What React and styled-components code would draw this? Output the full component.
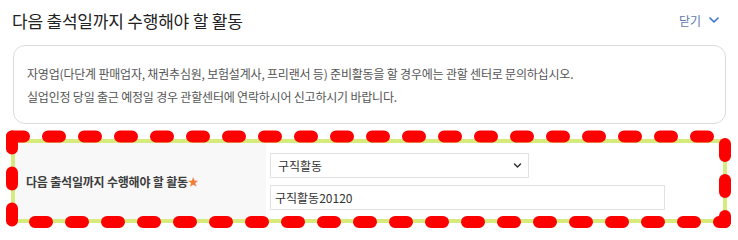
import React from "react";
import styled, { createGlobalStyle } from "styled-components";

const GlobalStyle = createGlobalStyle`
  html, body {
    margin: 0;
    padding: 0;
    background: #fff;
  }
  body {
    font-family: "Noto Sans CJK KR", "Noto Sans", sans-serif;
    color: #333;
  }
`;

const Page = styled.div`
  position: relative;
  width: 738px;
  height: 236px;
  overflow: hidden;
`;

const Header = styled.div`
  display: flex;
  align-items: center;
  justify-content: space-between;
  height: 40px;
  padding: 0 18px 0 12px;
`;

const Title = styled.h2`
  margin: 0;
  font-size: 17px;
  font-weight: 400;
  color: #222;
  letter-spacing: -0.2px;
`;

const CloseButton = styled.button`
  display: flex;
  align-items: center;
  gap: 7px;
  padding: 0;
  border: 0;
  background: none;
  font-family: inherit;
  font-size: 12px;
  color: #5c78b2;
  cursor: pointer;
`;

const InfoBox = styled.div`
  margin: 5px 12px 0 13px;
  padding: 16px 13px 15px;
  border: 1px solid #dcdcdc;
  border-radius: 12px;
  font-size: 12px;
  line-height: 23px;
  letter-spacing: -0.2px;
  color: #555;
`;

const FormTable = styled.div`
  display: grid;
  grid-template-columns: 251px 1fr;
  margin: 15px 11px 0;
  border: 4px solid #d6eb7e;
`;

const LabelCell = styled.div`
  display: flex;
  align-items: center;
  padding-left: 11px;
  background: #f8f8f8;
  font-size: 12px;
  font-weight: 700;
  letter-spacing: -0.2px;
  color: #3d3d3d;
`;

const Required = styled.span`
  font-size: 11px;
  color: #f27b35;
`;

const FieldCell = styled.div`
  display: flex;
  flex-direction: column;
  gap: 8px;
  padding: 9px 0 9px 4px;
`;

const SelectWrap = styled.div`
  position: relative;
  width: 259px;
  height: 25px;

  svg {
    position: absolute;
    right: 7px;
    top: 9px;
    pointer-events: none;
  }
`;

const Select = styled.select`
  appearance: none;
  width: 100%;
  height: 100%;
  box-sizing: border-box;
  padding: 0 24px 0 7px;
  border: 1px solid #e2e2e2;
  border-radius: 0;
  background: #fff;
  font-family: inherit;
  font-size: 12px;
  color: #333;
  outline: none;
`;

const TextInput = styled.input`
  width: ${(p) => p.width}px;
  height: 25px;
  box-sizing: border-box;
  padding: 0 4px;
  border: 1px solid #e2e2e2;
  font-family: inherit;
  font-size: 12px;
  color: #333;
  outline: none;
`;

const Annotation = styled.svg`
  position: absolute;
  left: 0;
  top: 0;
  pointer-events: none;

  line {
    stroke: #ff0000;
    stroke-width: 12;
    stroke-linecap: round;
    stroke-dasharray: 12 24;
  }
`;

const Chevron = ({ size = 12, color = "#3b6fd4", width = 1.6 }) => (
  <svg width={size} height={size} viewBox="0 0 12 12" fill="none">
    <path d="M2 4l4 4 4-4" stroke={color} strokeWidth={width} strokeLinecap="round" strokeLinejoin="round" />
  </svg>
);

const App = () => {
  return (
    <Page>
      <GlobalStyle />
      <Header>
        <Title>다음 출석일까지 수행해야 할 활동</Title>
        <CloseButton type="button">
          닫기
          <Chevron />
        </CloseButton>
      </Header>

      <InfoBox>
        <div>자영업(다단계 판매업자, 채권추심원, 보험설계사, 프리랜서 등) 준비활동을 할 경우에는 관할 센터로 문의하십시오.</div>
        <div>실업인정 당일 출근 예정일 경우 관할센터에 연락하시어 신고하시기 바랍니다.</div>
      </InfoBox>

      <FormTable>
        <LabelCell>
          다음 출석일까지 수행해야 할 활동<Required>★</Required>
        </LabelCell>
        <FieldCell>
          <SelectWrap>
            <Select defaultValue="구직활동">
              <option value="구직활동">구직활동</option>
            </Select>
            <Chevron size={9} color="#333" width={2} />
          </SelectWrap>
          <TextInput width={395} defaultValue="구직활동20120" />
        </FieldCell>
      </FormTable>

      <Annotation width="738" height="236">
        <line x1="12" y1="136.5" x2="725" y2="136.5" />
        <line x1="725" y1="136.5" x2="725" y2="222" style={{ strokeDashoffset: 28.5 }} />
        <line x1="12" y1="222" x2="725" y2="222" style={{ strokeDashoffset: 13 }} />
        <line x1="12" y1="136.5" x2="12" y2="222" />
      </Annotation>
    </Page>
  );
};

export default App;
